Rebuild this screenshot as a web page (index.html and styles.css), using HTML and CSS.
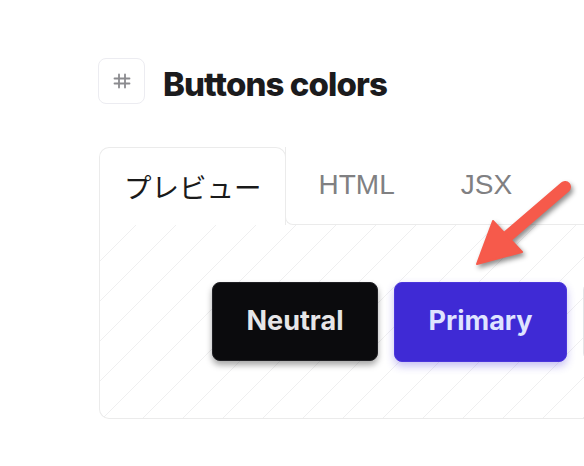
FILE: index.html
```html
<!DOCTYPE html>
<html lang="ja">
<head>
<meta charset="utf-8">
<title>Buttons colors</title>
<link rel="stylesheet" href="styles.css">
</head>
<body>
<div class="page">
  <header class="title-row">
    <a class="anchor" href="#buttons-colors" aria-label="anchor">
      <svg width="18" height="16" viewBox="0 0 18 16" fill="none" stroke="#8b8b8f" stroke-width="1.8" stroke-linecap="round">
        <path d="M6 1.5V14.5M12 1.5V14.5M1.5 5.5H16.5M1.5 10.5H16.5"/>
      </svg>
    </a>
    <h1 class="title">Buttons colors</h1>
  </header>

  <section class="example">
    <div class="tabs">
      <div class="tab tab-active">プレビュー</div>
      <div class="tab-rest">
        <div class="tab">HTML</div>
        <div class="tab">JSX</div>
      </div>
    </div>
    <div class="preview">
      <button class="btn btn-neutral">Neutral</button>
      <button class="btn btn-primary">Primary</button>
      <span class="btn-edge" aria-hidden="true"></span>
    </div>
  </section>

  <svg class="arrow" width="584" height="466" viewBox="0 0 584 466">
    <g class="arrow-shape">
      <path d="M565 187 L508 236" stroke="#f65a4b" stroke-width="12" stroke-linecap="round" fill="none"/>
      <path d="M477 264 L493 221 L522 252 Z" fill="#f65a4b" stroke="#f65a4b" stroke-width="2" stroke-linejoin="round"/>
    </g>
  </svg>
</div>
</body>
</html>
```

FILE: styles.css
```css
* {
  box-sizing: border-box;
}

html, body {
  margin: 0;
  padding: 0;
  background: #ffffff;
}

body {
  width: 584px;
  height: 466px;
  overflow: hidden;
  font-family: "Liberation Sans", Arial, sans-serif;
}

.page {
  position: relative;
  padding: 58px 0 0 98px;
}

.title-row {
  display: flex;
  align-items: center;
  gap: 18px;
  height: 46px;
}

.anchor {
  display: flex;
  align-items: center;
  justify-content: center;
  width: 47px;
  height: 46px;
  border: 1px solid #ececf1;
  border-radius: 8px;
  background: #ffffff;
}

.title {
  margin: 0;
  padding-top: 5px;
  font-family: Inter, "Noto Sans", sans-serif;
  font-weight: 800;
  font-size: 33px;
  letter-spacing: -0.9px;
  color: #1b1b1d;
}

.example {
  width: 640px;
  margin: 43px 0 0 1px;
}

.tabs {
  display: flex;
  height: 78px;
}

.tab {
  display: flex;
  align-items: center;
  font-size: 28px;
  color: #808082;
  padding: 0 33px;
}

.tab-active {
  font-family: "Noto Sans CJK JP", "Noto Sans", sans-serif;
  font-size: 27.5px;
  color: #1a1a1a;
  padding: 0 23px 2px 24px;
  border: 1px solid #ebebeb;
  border-bottom: none;
  border-radius: 10px 10px 0 0;
  background: #ffffff;
}

.tab-rest {
  flex: 1;
  display: flex;
  margin-left: -1px;
  border-left: 1px solid #ebebeb;
  border-bottom: 1px solid #ebebeb;
  border-bottom-left-radius: 8px;
}

.tab-rest .tab {
  padding-bottom: 2px;
}

.preview {
  display: flex;
  align-items: center;
  gap: 16px;
  height: 194px;
  padding-left: 112px;
  border-left: 1px solid #ebebeb;
  border-bottom: 1px solid #ebebeb;
  border-bottom-left-radius: 10px;
  background-color: #ffffff;
  background-image: linear-gradient(to bottom right, transparent calc(50% - 0.7px), #efeff0 50%, transparent calc(50% + 0.7px));
  background-size: 40px 40px;
  background-position: -4px 0;
}

.btn {
  flex: none;
  height: 79px;
  padding: 0 0 2px;
  font-family: Inter, "Noto Sans", sans-serif;
  font-weight: 700;
  font-size: 27px;
  border-radius: 8px;
  cursor: pointer;
}

.btn-neutral {
  width: 166px;
  background: #0b0b0d;
  color: #e6e6e8;
  border: 1px solid #202024;
  box-shadow: 0 4px 6px rgba(0, 0, 0, 0.35);
}

.btn-primary {
  width: 173px;
  height: 80px;
  background: #3f2ad5;
  color: #dfe4ff;
  border: 1px solid #4b36dc;
  box-shadow: 0 4px 8px rgba(63, 42, 213, 0.3);
}

.btn-edge {
  flex: none;
  width: 40px;
  height: 79px;
  border: 1px solid #e4e4e7;
  border-radius: 8px;
  background: #ffffff;
}

.arrow {
  position: absolute;
  left: 0;
  top: 0;
  pointer-events: none;
}

.arrow-shape {
  filter: drop-shadow(2px 3px 2.5px rgba(0, 0, 0, 0.45));
}
```
